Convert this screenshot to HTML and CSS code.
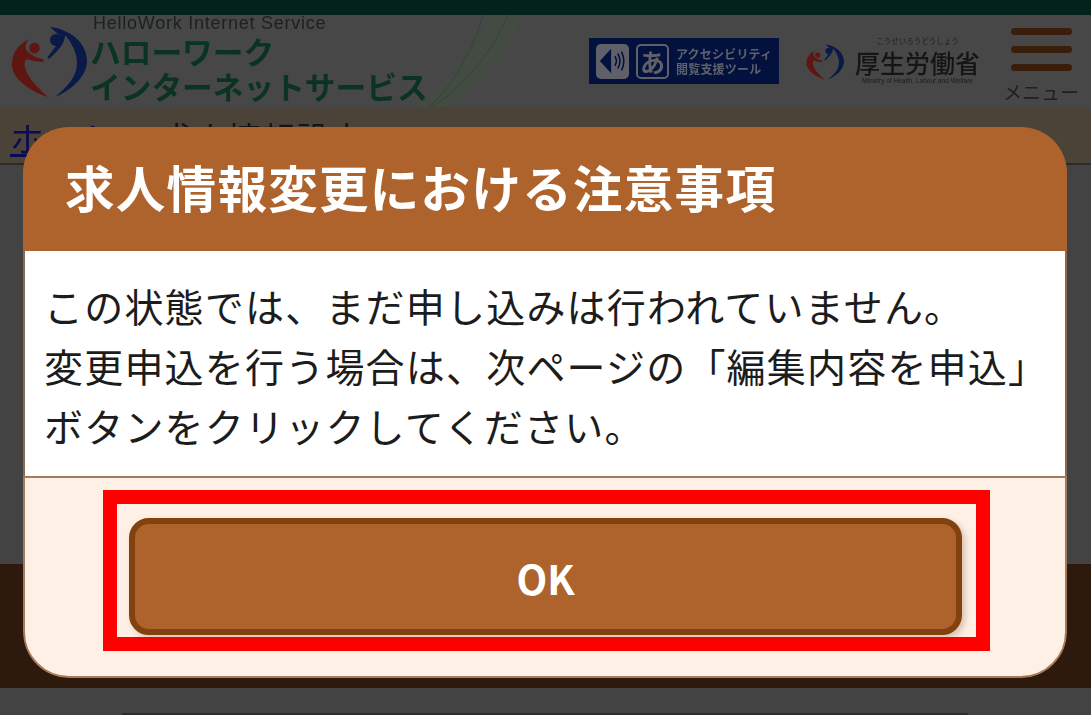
FILE: index.html
```html
<!DOCTYPE html>
<html lang="ja">
<head>
<meta charset="utf-8">
<title>求人情報変更における注意事項</title>
<link rel="stylesheet" href="styles.css">
</head>
<body>
<svg class="defs" aria-hidden="true">
  <symbol id="heart" viewBox="6 8 78 74">
    <path d="M24 22C12 28 6 38 7 50 9 62 24 74 43 80 32 70 22 60 20 50 19 46 20 43 22 42 27 44 34 45 39 45L38 42C32 41 26 38 23 35 20 33 19 28 24 22Z" fill="#5f1512"/>
    <circle cx="29.500" cy="31" r="5.200" fill="#5f1512"/>
    <path d="M45 10C65 12 82 26 82 44 82 60 65 74 50 80 62 70 72 60 72 46 72 36 67 26 60 18 60 26 54 33 44 42L42.500 40C47 35 49 31 52 28 58 28 57 20 54 18Z" fill="#0a1a48"/>
    <circle cx="51" cy="23" r="6" fill="#0a1a48"/>
  </symbol>
</svg>
<div class="page">
  <div class="topbar"></div>
  <header class="site-header">
    <div class="brand">
      <svg class="brand-mark"><use href="#heart"/></svg>
      <div class="brand-text">
        <p class="brand-en">HelloWork Internet Service</p>
        <p class="brand-ja">ハローワーク<br>インターネットサービス</p>
      </div>
      <svg class="brand-swoosh" viewBox="390 15 150 92" aria-hidden="true">
        <path d="M415 107C450 80 475 50 490 15H523C505 55 480 85 450 107Z" fill="#434b42"/>
        <path d="M430 107C455 82 473 50 483 15" fill="none" stroke="#2b4a36" stroke-width="1"/>
        <path d="M433 107C468 82 493 50 508 15" fill="none" stroke="#2b4a36" stroke-width="1"/>
      </svg>
    </div>
    <div class="tools">
      <div class="access">
        <span class="access-key">
          <svg viewBox="0 0 34 34" aria-hidden="true">
            <path d="M3 17 15 4V30Z" fill="#02113d"/>
            <path d="M19 12C21 15 21 19 19 22M22 9C25 14 25 20 22 25M26 7C29 13 29 21 26 27" fill="none" stroke="#02113d" stroke-width="1.700"/>
          </svg>
        </span>
        <span class="access-key access-key-text">あ</span>
        <span class="access-label">アクセシビリティ<br>閲覧支援ツール</span>
      </div>
      <div class="ministry">
        <svg class="ministry-mark"><use href="#heart"/></svg>
        <div class="ministry-text">
          <span class="ministry-kana">こうせいろうどうしょう</span>
          <span class="ministry-name">厚生労働省</span>
          <span class="ministry-en">Ministry of Health, Labour and Welfare</span>
        </div>
      </div>
      <div class="menu">
        <span class="menu-bars"><i></i><i></i><i></i></span>
        <span class="menu-label">メニュー</span>
      </div>
    </div>
  </header>
  <nav class="crumbs"><a>ホーム</a><span class="sep">&gt;</span><span>求人情報設定</span></nav>
  <main class="content"></main>
  <section class="band"></section>
  <footer class="tail"><div class="tail-line"></div></footer>
</div>

<div class="modal" role="dialog">
  <h1 class="modal-title">求人情報変更における注意事項</h1>
  <div class="modal-body">
    <p>この状態では、まだ申し込みは行われていません。</p>
    <p>変更申込を行う場合は、次ページの「編集内容を申込」</p>
    <p>ボタンをクリックしてください。</p>
  </div>
  <div class="modal-foot">
    <div class="highlight">
      <button class="ok" type="button">OK</button>
    </div>
  </div>
</div>
</body>
</html>
```
FILE: styles.css
```css
* { box-sizing: border-box; }
html, body { margin: 0; height: 100%; overflow: hidden; }
body {
  position: relative;
  width: 1091px;
  height: 715px;
  background: #434343;
  font-family: "Noto Sans CJK JP", "Noto Sans", sans-serif;
}
p, h1 { margin: 0; }
.defs { display: none; }

.page { display: flex; flex-direction: column; height: 715px; filter: blur(0.6px); }
.topbar { height: 15px; background: #03231a; flex: none; }
.site-header {
  height: 92px;
  flex: none;
  background: #474747;
  display: flex;
  justify-content: space-between;
  padding-left: 11px;
}
.brand { display: flex; position: relative; width: 530px; }
.brand-mark { width: 78px; height: 78px; margin-top: 8px; flex: none; }
.brand-text { margin-left: 1px; position: relative; z-index: 1; }
.brand-en {
  font: 18px/16px "Liberation Sans", sans-serif;
  letter-spacing: 0.75px;
  color: #1a211e;
  margin-left: 3px;
  height: 16px;
  white-space: nowrap;
}
.brand-ja {
  font-weight: 700;
  font-size: 30.7px;
  line-height: 35px;
  color: #0a3322;
  margin-top: 2px;
  white-space: nowrap;
}
.brand-swoosh { position: absolute; left: 379px; top: 0; width: 150px; height: 92px; }

.tools { display: flex; align-items: flex-start; padding-right: 11px; }
.access {
  width: 190px;
  height: 46px;
  margin-top: 23px;
  background: #02113d;
  display: flex;
  align-items: center;
  padding-left: 7px;
  gap: 7px;
}
.access-key {
  width: 33px;
  height: 35px;
  background: #606168;
  border-radius: 5px;
  display: flex;
  align-items: center;
  justify-content: center;
  flex: none;
}
.access-key svg { width: 32px; height: 32px; }
.access-key-text {
  background: #02113d;
  border: 2px solid #606168;
  color: #606168;
  font-size: 25px;
  line-height: 1;
  font-weight: 700;
}
.access-label {
  color: #5e626c;
  font-size: 12px;
  line-height: 15px;
  font-weight: 700;
  white-space: nowrap;
  letter-spacing: 0.2px;
}
.ministry { display: flex; margin-left: 27px; margin-top: 22px; width: 177px; }
.ministry-mark { width: 39px; height: 44px; flex: none; margin-top: 3px; }
.ministry-text { display: flex; flex-direction: column; align-items: center; margin-left: 10px; }
.ministry-kana { font-size: 7.5px; line-height: 8px; color: #1f1f1f; white-space: nowrap; }
.ministry-name { font-size: 25px; line-height: 30px; font-weight: 500; color: #151515; white-space: nowrap; margin-top: 2px; }
.ministry-en { font: 6.5px/8px "Liberation Sans", sans-serif; color: #1c1c1c; white-space: nowrap; }
.menu { display: flex; flex-direction: column; align-items: center; margin-left: 19px; width: 78px; }
.menu-bars { display: flex; flex-direction: column; gap: 11px; margin-top: 13px; width: 61px; }
.menu-bars i { display: block; height: 7px; border-radius: 4px; background: #3a1d0b; }
.menu-label { font-size: 19px; line-height: 20px; color: #202020; margin-top: 11px; white-space: nowrap; }

.crumbs {
  height: 58px;
  flex: none;
  padding: 13px 0 0 10px;
  background: #4b4238;
  border-bottom: 2px solid #2f2a25;
  font-size: 34px;
  line-height: 36px;
  color: #141414;
  white-space: nowrap;
  overflow: hidden;
}
.crumbs a { color: #0a0a55; text-decoration: underline; }
.sep { margin: 0 15px; }
.content { flex: none; height: 399px; background: #434343; }
.band { flex: none; height: 124px; background: #2e1a0c; }
.tail { flex: 1; background: #434343; display: flex; flex-direction: column; justify-content: flex-end; padding: 0 123px 0 122px; }
.tail-line { height: 2px; background: #2c2c2c; }

.modal {
  position: absolute;
  left: 23px;
  top: 127px;
  width: 1044px;
  height: 551px;
  display: flex;
  flex-direction: column;
  border-radius: 46px;
  overflow: hidden;
}
.modal-title {
  height: 124px;
  flex: none;
  background: #af632c;
  color: #fff;
  font-size: 49.5px;
  letter-spacing: 1.3px;
  font-weight: 700;
  line-height: 120px;
  padding-left: 42px;
  white-space: nowrap;
}
.modal-body {
  height: 225px;
  flex: none;
  background: #fff;
  border: solid #8b6a52;
  border-width: 0 2px;
  padding: 24px 0 0 19px;
  font-size: 39px;
  letter-spacing: 1.2px;
  line-height: 60px;
  color: #1c1c1c;
  white-space: nowrap;
}
.modal-foot {
  flex: 1;
  background: #fff0e5;
  border: 2px solid #a6795a;
  border-radius: 0 0 46px 46px;
  padding: 12px 0 0 78px;
}
.highlight {
  width: 887px;
  height: 161px;
  border: 14px solid #ff0000;
  padding: 14px 0 0 12px;
}
.ok {
  display: block;
  width: 833px;
  height: 117px;
  border: 6px solid #83410f;
  border-radius: 20px;
  background: #af632c;
  color: #fff;
  font: 700 40px/1 "Noto Sans CJK JP", sans-serif;
  padding: 2px 0 0;
  box-shadow: 3px 3px 6px rgba(90, 50, 20, 0.25);
}
```
